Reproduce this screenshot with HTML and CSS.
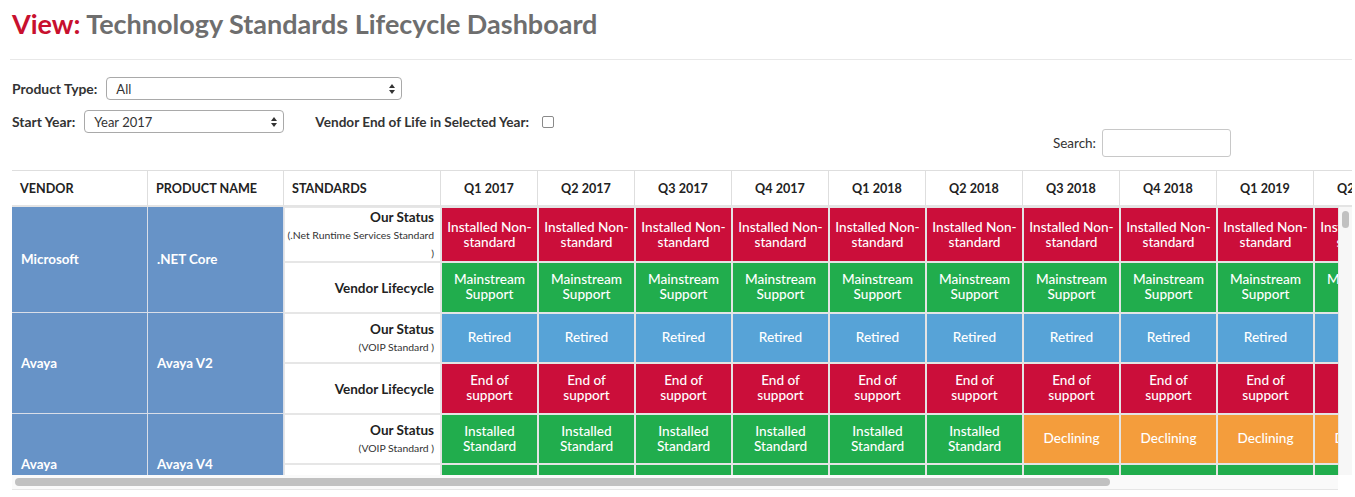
FILE: index.html
```html
<!DOCTYPE html>
<html>
<head>
<meta charset="utf-8">
<link rel="stylesheet" href="styles.css">
</head>
<body>
<div class="page">
  <h1 class="title"><span class="view">View:</span> Technology Standards Lifecycle Dashboard</h1>
  <hr class="rule">
  <div class="controls">
    <div class="filters">
      <div class="filter-row">
        <span class="lbl">Product Type:</span>
        <div class="select w-type"><span>All</span><svg class="arrows" width="6" height="10" viewBox="0 0 6 10"><path d="M3 0L6 4H0Z M0 6H6L3 10Z" fill="#333"/></svg></div>
      </div>
      <div class="filter-row">
        <span class="lbl">Start Year:</span>
        <div class="select w-year"><span>Year 2017</span><svg class="arrows" width="6" height="10" viewBox="0 0 6 10"><path d="M3 0L6 4H0Z M0 6H6L3 10Z" fill="#333"/></svg></div>
        <span class="lbl eol">Vendor End of Life in Selected Year:</span>
        <span class="checkbox"></span>
      </div>
    </div>
    <div class="search"><span class="search-lbl">Search:</span><span class="input"></span></div>
  </div>

  <div class="grid">
    <div class="head-clip">
      <table class="t head">
        <colgroup><col class="c-v"><col class="c-v"><col class="c-s"><col class="c-q"><col class="c-q"><col class="c-q"><col class="c-q"><col class="c-q"><col class="c-q"><col class="c-q"><col class="c-q"><col class="c-q"><col class="c-q"><col class="c-q"></colgroup>
        <tr>
          <th class="l">VENDOR</th><th class="l">PRODUCT NAME</th><th class="l">STANDARDS</th>
          <th>Q1 2017</th><th>Q2 2017</th><th>Q3 2017</th><th>Q4 2017</th>
          <th>Q1 2018</th><th>Q2 2018</th><th>Q3 2018</th><th>Q4 2018</th>
          <th>Q1 2019</th><th>Q2 2019</th><th>Q3 2019</th>
        </tr>
      </table>
    </div>
    <div class="body-wrap">
      <div class="body-clip">
        <table class="t body">
          <colgroup><col class="c-v"><col class="c-v"><col class="c-s"><col class="c-q"><col class="c-q"><col class="c-q"><col class="c-q"><col class="c-q"><col class="c-q"><col class="c-q"><col class="c-q"><col class="c-q"><col class="c-q"><col class="c-q"></colgroup>
          <tr>
            <td class="v" rowspan="2">Microsoft</td><td class="v" rowspan="2">.NET Core</td>
            <td class="s"><b>Our Status </b><br><small>(.Net Runtime Services Standard )</small></td>
            <td class="q red">Installed Non-standard</td><td class="q red">Installed Non-standard</td><td class="q red">Installed Non-standard</td><td class="q red">Installed Non-standard</td>
            <td class="q red">Installed Non-standard</td><td class="q red">Installed Non-standard</td><td class="q red">Installed Non-standard</td><td class="q red">Installed Non-standard</td>
            <td class="q red">Installed Non-standard</td><td class="q red">Installed Non-standard</td><td class="q red">Installed Non-standard</td>
          </tr>
          <tr>
            <td class="s"><b>Vendor Lifecycle</b></td>
            <td class="q green">Mainstream Support</td><td class="q green">Mainstream Support</td><td class="q green">Mainstream Support</td><td class="q green">Mainstream Support</td>
            <td class="q green">Mainstream Support</td><td class="q green">Mainstream Support</td><td class="q green">Mainstream Support</td><td class="q green">Mainstream Support</td>
            <td class="q green">Mainstream Support</td><td class="q green">Mainstream Support</td><td class="q green">Mainstream Support</td>
          </tr>
          <tr>
            <td class="v" rowspan="2">Avaya</td><td class="v" rowspan="2">Avaya V2</td>
            <td class="s"><b>Our Status </b><br><small>(VOIP Standard )</small></td>
            <td class="q blue">Retired</td><td class="q blue">Retired</td><td class="q blue">Retired</td><td class="q blue">Retired</td>
            <td class="q blue">Retired</td><td class="q blue">Retired</td><td class="q blue">Retired</td><td class="q blue">Retired</td>
            <td class="q blue">Retired</td><td class="q blue">Retired</td><td class="q blue">Retired</td>
          </tr>
          <tr>
            <td class="s"><b>Vendor Lifecycle</b></td>
            <td class="q red">End of support</td><td class="q red">End of support</td><td class="q red">End of support</td><td class="q red">End of support</td>
            <td class="q red">End of support</td><td class="q red">End of support</td><td class="q red">End of support</td><td class="q red">End of support</td>
            <td class="q red">End of support</td><td class="q red">End of support</td><td class="q red">End of support</td>
          </tr>
          <tr>
            <td class="v" rowspan="2">Avaya</td><td class="v" rowspan="2">Avaya V4</td>
            <td class="s"><b>Our Status </b><br><small>(VOIP Standard )</small></td>
            <td class="q green">Installed Standard</td><td class="q green">Installed Standard</td><td class="q green">Installed Standard</td><td class="q green">Installed Standard</td>
            <td class="q green">Installed Standard</td><td class="q green">Installed Standard</td><td class="q orange">Declining</td><td class="q orange">Declining</td>
            <td class="q orange">Declining</td><td class="q orange">Declining</td><td class="q orange">Declining</td>
          </tr>
          <tr>
            <td class="s"><b>Vendor Lifecycle</b></td>
            <td class="q green">Mainstream Support</td><td class="q green">Mainstream Support</td><td class="q green">Mainstream Support</td><td class="q green">Mainstream Support</td>
            <td class="q green">Mainstream Support</td><td class="q green">Mainstream Support</td><td class="q green">Mainstream Support</td><td class="q green">Mainstream Support</td>
            <td class="q green">Mainstream Support</td><td class="q green">Mainstream Support</td><td class="q green">Mainstream Support</td>
          </tr>
        </table>
      </div>
      <div class="vscroll"><div class="vthumb"></div></div>
    </div>
    <div class="hscroll"><div class="hthumb"></div></div>
  </div>
</div>
</body>
</html>
```

FILE: styles.css
```css
* { box-sizing: border-box; }
html, body { margin: 0; padding: 0; background: #fff; }
body { font-family: Lato, "Open Sans", sans-serif; color: #333; overflow: hidden; }

.page { padding: 0 3px 0 12px; width: 1355px; }

.title {
  margin: 0;
  padding-top: 6px;
  font-size: 27px;
  line-height: 36px;
  font-weight: 700;
  color: #6e6e6e;
}
.title .view { color: #c8102e; }

.rule {
  margin: 17px 0 0 -2px;
  border: 0;
  border-top: 1px solid #e8e8e8;
  height: 0;
}

.controls {
  display: flex;
  justify-content: space-between;
  align-items: flex-start;
  margin-top: 17px;
}
.filters { display: flex; flex-direction: column; gap: 10px; }
.filter-row { display: flex; align-items: center; height: 23px; }
.lbl { font-size: 13.9px; font-weight: 700; color: #333; margin-right: 9px; }
.lbl.eol { font-size: 13.6px; margin-left: 31px; margin-right: 13px; }

.select {
  display: flex;
  align-items: center;
  justify-content: space-between;
  height: 23px;
  padding: 0 6px 0 9px;
  border: 1px solid #a9a9a9;
  border-radius: 4px;
  background: #fff;
  font-size: 13px;
  color: #333;
}
.w-type { width: 296px; }
.w-year { width: 200px; }
.arrows { display: block; }

.checkbox {
  width: 12px;
  height: 12px;
  border: 1px solid #8a8a8a;
  border-radius: 2px;
  background: #fff;
}

.search {
  display: flex;
  align-items: center;
  margin-top: 52px;
  margin-right: 121px;
}
.search-lbl { font-size: 13.5px; color: #333; margin-right: 6px; }
.input {
  width: 129px;
  height: 28px;
  border: 1px solid #c8c8c8;
  border-radius: 3px;
  background: #fff;
}

.grid { margin-top: 13px; width: 1340px; }
.head-clip { width: 1340px; overflow: hidden; }
.body-wrap { display: flex; height: 268px; }
.body-clip { width: 1326px; height: 268px; overflow: hidden; }

.t {
  border-collapse: separate;
  border-spacing: 0;
  table-layout: fixed;
  width: 1496px;
}
.c-v { width: 136px; }
.c-s { width: 157px; }
.c-q { width: 97px; }

.head th {
  height: 37px;
  padding: 0 6px;
  border-top: 1px solid #dedede;
  border-right: 1px solid #dedede;
  border-bottom: 2px solid #e4e4e4;
  font-size: 12.6px;
  font-weight: 700;
  color: #222;
  text-align: center;
  white-space: nowrap;
}
.head th.l { text-align: left; padding-left: 8px; }

.body tr { height: 50.5px; }
.body td { padding: 0; vertical-align: middle; }

.body td.v {
  background: #6793c7;
  color: #fff;
  font-size: 13.4px;
  font-weight: 700;
  padding-left: 9px;
  border-right: 1px solid #d9dee8;
  border-bottom: 1px solid #d9dee8;
}
.body td.s {
  background: #fff;
  text-align: right;
  padding: 0 6px 0 1px;
  border: 1px solid #e6e6e6;
  line-height: 15px;
}
.body td.s b { font-size: 13.5px; font-weight: 700; color: #222; }
.body td.s small { font-size: 10.4px; color: #333; }

.body td.q {
  border: 1px solid #e4e4e4;
  color: #fff;
  font-size: 13.6px;
  font-weight: 500;
  line-height: 15px;
  text-align: center;
  padding: 0 4px;
}
.red { background: #cb0e3a; }
.green { background: #21ad4d; }
.blue { background: #57a3d7; }
.orange { background: #f49d3c; }

.vscroll {
  width: 14px;
  height: 268px;
  background: #f7f7f7;
  border-left: 1px solid #e6e6e6;
  padding: 4px 3px 0 3px;
}
.vthumb {
  width: 7px;
  height: 17px;
  border-radius: 4px;
  background: #c1c1c1;
}

.hscroll {
  width: 1326px;
  height: 15px;
  background: #fafafa;
  border-bottom: 1px solid #e6e6e6;
  padding: 3px 3px;
}
.hthumb {
  width: 1095px;
  height: 8px;
  border-radius: 4px;
  background: #c1c1c1;
}
```
